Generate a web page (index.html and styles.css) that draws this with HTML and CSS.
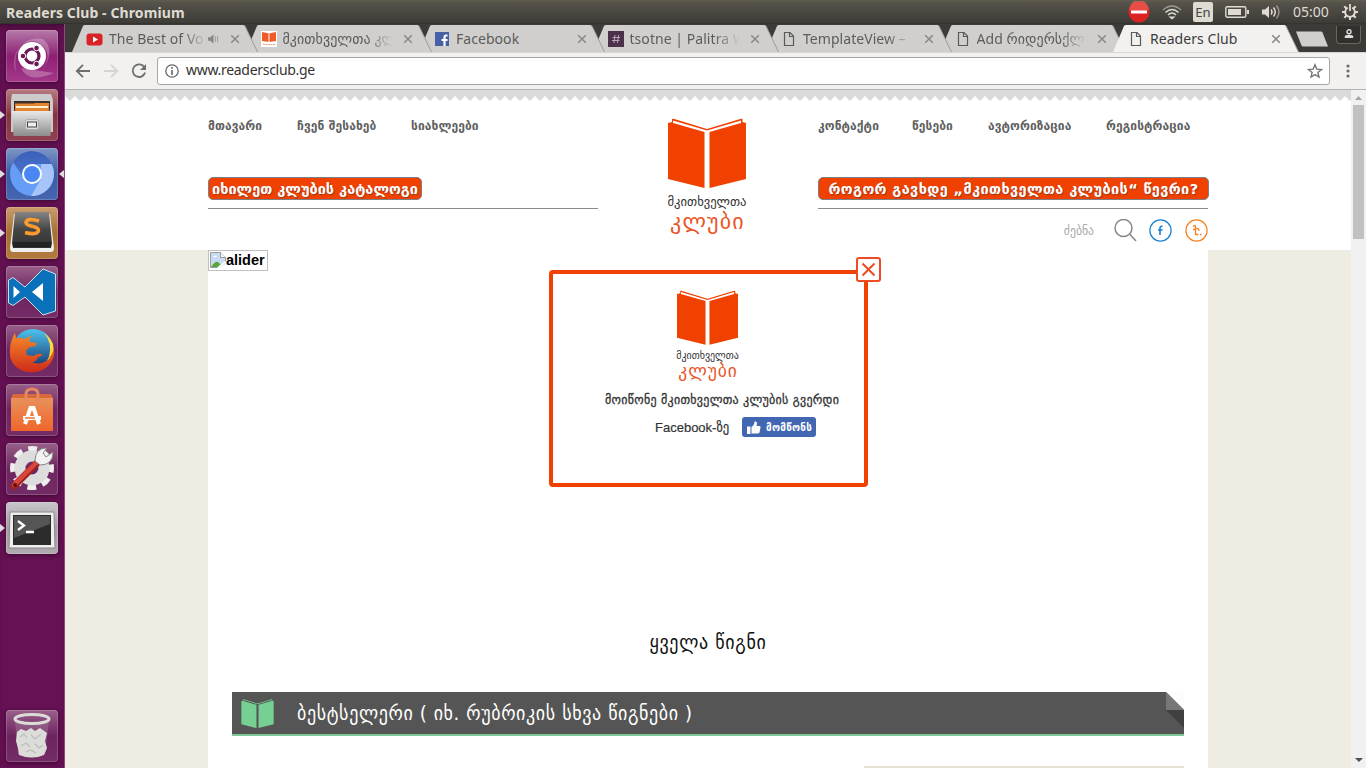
FILE: index.html
```html
<!DOCTYPE html>
<html lang="ka">
<head>
<meta charset="utf-8">
<title>Readers Club</title>
<link rel="stylesheet" href="styles.css">
</head>
<body>
<svg width="0" height="0" class="defs">
  <defs>
    <linearGradient id="chrome" x2="0" y2="1"><stop stop-color="#3a5fb8"/><stop offset="1" stop-color="#4d77d2"/></linearGradient>
    <linearGradient id="steel" x2="0" y2="1"><stop stop-color="#e8e8e8"/><stop offset="1" stop-color="#8c8c8c"/></linearGradient>
    <linearGradient id="dark" x2="0" y2="1"><stop stop-color="#858585"/><stop offset=".5" stop-color="#444"/><stop offset="1" stop-color="#333"/></linearGradient>
    <linearGradient id="fox" x2="0" y2="1"><stop stop-color="#f58a2b"/><stop offset="1" stop-color="#cf2c18"/></linearGradient>
    <linearGradient id="globe" x2="0" y2="1"><stop stop-color="#4cc4ee"/><stop offset="1" stop-color="#17306e"/></linearGradient>
    <linearGradient id="bag" x2="0" y2="1"><stop stop-color="#e8915a"/><stop offset="1" stop-color="#f0662b"/></linearGradient>
    <symbol id="tab" viewBox="0 0 186 28"><path class="tab-fill" d="M0 28 11 2Q11.500 1 13 1H171Q172.500 1 173 2L185.500 28Z"/><path class="tab-edge" d="M173 2 185.500 28" fill="none"/></symbol>
    <symbol id="x" viewBox="0 0 10 10"><path d="M1.200 1.200 8.800 8.800M8.800 1.200 1.200 8.800" stroke="#8a8a8a" stroke-width="1.600"/></symbol>
    <symbol id="doc" viewBox="0 0 16 16"><path d="M3.500 1.500H9L12.500 5V14.500H3.500ZM8.500 1.500V5.500H12.500" fill="none" stroke="#5a5a5a" stroke-width="1.200"/></symbol>
    <symbol id="book" viewBox="0 0 78 70"><path d="M0 5 4 4V1L5.500 .8 39 11 73 .8 74.500 1V4L78 5V61L41.500 70V14L73 5V2.500L39 12.500 5 2.500V5L36.500 14V70L0 61Z" class="book-fill"/></symbol>
  </defs>
</svg>
<div class="desktop">
  <header class="panel">
    <span class="panel-title">Readers Club - Chromium</span>
    <div class="indicators">
      <svg width="22" height="22" viewBox="0 0 22 22"><circle cx="11" cy="11" r="10.500" fill="#d22"/><path d="M1 9a10 10 0 0 1 20 0Q11 12 1 9" fill="#f06a5a" opacity=".6"/><path d="M3 9.500H19V12.500H3Z" fill="#fff"/></svg>
      <svg width="20" height="16" viewBox="0 0 20 16" fill="none" stroke="#dfdbd2" stroke-width="1.600"><path d="M1 6Q10-2 19 6" opacity=".55"/><path d="M3.500 8.500Q10 2.500 16.500 8.500M6 11Q10 7 14 11"/><path d="M8.500 13.200 10 14.500 11.500 13.200Z" fill="#dfdbd2"/></svg>
      <span class="lang">En</span>
      <svg width="24" height="14" viewBox="0 0 24 14"><rect x=".8" y="1.800" width="20" height="10.400" rx="1.500" fill="none" stroke="#dfdbd2" stroke-width="1.400"/><path d="M3 4H16V10H3ZM22 5H24V9H22Z" fill="#dfdbd2"/></svg>
      <svg width="20" height="16" viewBox="0 0 20 16" fill="none" stroke="#dfdbd2" stroke-width="1.500"><path d="M1 5.500H4L8 2V14L4 10.500H1Z" fill="#dfdbd2" stroke="none"/><path d="M10 5.500Q12 8 10 10.500M12.500 3.500Q16 8 12.500 12.500"/><path d="M15.500 1.500Q20.500 8 15.500 14.500" opacity=".5"/></svg>
      <span class="clock">05:00</span>
      <svg width="16" height="16" viewBox="0 0 16 16" fill="none" stroke="#dfdbd2"><path d="M5.800 3.800A4.800 4.800 0 1 0 10.200 3.800M8 0V7" stroke-width="1.800"/><path d="M8 13V16M0 8H3M13 8H16M2.300 2.300 4.500 4.500M13.700 2.300 11.500 4.500M2.300 13.700 4.500 11.500M13.700 13.700 11.500 11.500" stroke-width="2"/></svg>
    </div>
  </header>
  <div class="workspace">
    <nav class="launcher">
      <div class="tile dash"><svg viewBox="0 0 52 52"><path d="M10 42A24 24 0 0 1 37 9Q50 20 37 39 49 19 28 11 6 11 10 42M15 38Q22 54 48 43" fill="#fff" opacity=".25"/><circle cx="26" cy="26" r="14" fill="#fff"/><circle cx="26" cy="26" r="7" fill="none" stroke="#6b1854" stroke-width="3.200"/><g fill="#6b1854" stroke="#fff" stroke-width="1"><circle cx="17" cy="26" r="2.800"/><circle cx="30.500" cy="18" r="2.800"/><circle cx="30.500" cy="34" r="2.800"/></g></svg></div>
      <div class="tile files running"><svg viewBox="0 0 52 52"><path d="M6 5H45L47 11V43H5V11Z" fill="#ccc"/><path d="M8 12H44V24H8Z" fill="#3c302b"/><path d="M9 14.500H28L29 14H43V22H9Z" fill="#e38432"/><path d="M10 17H42V19H10Z" fill="#fff2cf"/><path d="M6 22H46L44.500 47H7.500Z" fill="url(#steel)"/><rect x="19.500" y="30.500" width="13" height="10" rx="2" fill="#ddd" stroke="#aaa"/><rect x="21.500" y="33" width="9" height="5" fill="#eee" stroke="#444"/></svg></div>
      <div class="tile chromium running focused"><svg viewBox="0 0 52 52"><circle cx="26" cy="26" r="22" fill="#669df6"/><path d="M7 14A22 22 0 0 1 46 16H26L17 29Z" fill="url(#chrome)"/><path d="M35 16H45.500A22 22 0 0 1 25 48L35 31Z" fill="#a6c4fa"/><circle cx="26" cy="26" r="10" fill="#fff"/><circle cx="26" cy="26" r="8" fill="#4a87f2"/></svg></div>
      <div class="tile sublime running"><svg viewBox="0 0 52 52"><path d="M8 7H44L48 41Q48 45 45 45H7Q4 45 4 41Z" fill="#eee"/><path d="M9 5H43L46 36 45 41H7L6 36Z" fill="url(#dark)"/><path d="M7 35H45V40H7Z" fill="#222"/><path d="M33 14Q20.500 10.500 20 15.500C20 20.500 32.500 18 32.500 23.500Q31.500 28.500 19 25.500" fill="none" stroke="#ff9b2e" stroke-width="3.600"/></svg></div>
      <div class="tile vscode"><svg viewBox="0 0 52 52"><path d="M2.500 14 7 11.500 19 21 37 3 49.500 8V45L37 49 19 31 7 39.500 2.500 37Z" fill="#0871ba" stroke="#cedfee"/><path d="M37 17 26 26 37 35ZM7.500 20V32L14 26Z" fill="#fff"/></svg></div>
      <div class="tile firefox"><svg viewBox="0 0 52 52"><circle cx="27" cy="24" r="20" fill="url(#globe)"/><path d="M38 8Q47 18 43 32 38 43 28 45L40 42Q50 30 47 19 44 12 38 8" fill="#ffd83b"/><path d="M9 8 10 13Q15 12 18 14L27 10Q22 14 24 17L31 18 30 21 24 22Q18 25 21 30L27 31Q32 28 36 29 36 32 32 32 30 38 25 37 35 41 43 34 47 28 48 23 50 34 41 42 31 50 17 46 2 40 4 23 5 14 9 8" fill="url(#fox)"/></svg></div>
      <div class="tile software"><svg viewBox="0 0 52 52"><path d="M7 10H45L47 14V47H5V14Z" fill="#d9683a"/><path d="M5 14H47V47H5Z" fill="url(#bag)"/><path d="M20 17V10Q20 5 26 5T32 10V17" fill="none" stroke="#e98660" stroke-width="3"/><path d="M19 40 24.500 24H27.500L33 40M17 34H35" fill="none" stroke="#fff" stroke-width="4"/><path d="M19 34H29" stroke="#ef7434" stroke-width="1.500"/></svg></div>
      <div class="tile settings"><svg viewBox="0 0 52 52"><circle cx="26" cy="25" r="18.500" fill="none" stroke="#eee" stroke-width="7" stroke-dasharray="8.500 6.030" stroke-dashoffset="4.250"/><circle cx="26" cy="25" r="12" fill="none" stroke="#ddd" stroke-width="11"/><path d="M8 43 32 19" stroke="#9e211d" stroke-width="7" stroke-linecap="round"/><path d="M8 42 31 19" stroke="#db463c" stroke-width="4.500" stroke-linecap="round"/><path d="M29 18Q29 5 41 5L37 10 40 14 47 9Q47 22 34 22Z" fill="#f2f2f2" stroke="#888"/><circle cx="9" cy="42" r="2" fill="#5c1411"/></svg></div>
      <div class="tile terminal running"><svg viewBox="0 0 52 52"><path d="M4 10H48L49 46H3Z" fill="#eee" stroke="#888"/><path d="M7 13H45V43H7Z" fill="#2c2c2c"/><path d="M8 14H44V22L8 36Z" fill="#555"/><path d="M12 19 18 23.500 12 28M20 30H28" fill="none" stroke="#fff" stroke-width="2.300"/></svg></div>
      <div class="tile trash"><svg viewBox="0 0 52 52"><path d="M9 12 12 44Q26 51 39 44L43 12Z" fill="#b89ab4" opacity=".3"/><path d="M11 22 15 19 20 21 25 18 29 21 34 18 41 23 39 31 41 38 38 45Q26 50 13 45L12 38 10 31Z" fill="#dcdcd9"/><path d="M14 27 18 24 21 28M25 25 29 29 35 24M15 36 20 33 24 37M29 34 33 38 37 35M20 42 25 40 30 43" fill="none" stroke="#bcbcb8" stroke-width="1.200"/><ellipse cx="26" cy="9" rx="17" ry="4.500" fill="none" stroke="#dcdcd6" stroke-width="3"/></svg></div>
    </nav>
    <main class="browser">
      <div class="tabstrip">
        <div class="tab"><svg class="tab-bg"><use href="#tab"/></svg><svg class="fav" viewBox="0 0 16 16"><rect x="-.5" y="2.500" width="16" height="12" rx="3" fill="#d72228"/><path d="M6 5.500 11 8.500 6 11.500Z" fill="#fff"/></svg><span class="tab-title fade short">The Best of Vo</span><svg class="audio" viewBox="0 0 12 10"><path d="M0 3H2.500L6 0V10L2.500 7H0Z" fill="#888"/><path d="M8 2V8M10.500 1.500V8.500" stroke="#999"/></svg><svg class="close"><use href="#x"/></svg></div>
        <div class="tab"><svg class="tab-bg"><use href="#tab"/></svg><svg class="fav" viewBox="0 0 16 16"><path d="M0 0H16V16H0Z" fill="#fff"/><path d="M1 1 8 2.500 15 1V10L8 11 1 10Z" fill="#f15a24"/><path d="M8 2.500V11" stroke="#fff"/><path d="M2 13.500H14" stroke="#f2a387" stroke-dasharray="2 .5"/></svg><span class="tab-title fade">მკითხველთა კლ</span><svg class="close"><use href="#x"/></svg></div>
        <div class="tab"><svg class="tab-bg"><use href="#tab"/></svg><svg class="fav" viewBox="0 0 16 16"><path d="M1 1H15V15H1Z" fill="#4560a5"/><path d="M13.500 4.500H12Q10.500 4.500 10.500 6.500V15M7.500 9H13.500" fill="none" stroke="#fff" stroke-width="2.200"/></svg><span class="tab-title">Facebook</span><svg class="close"><use href="#x"/></svg></div>
        <div class="tab"><svg class="tab-bg"><use href="#tab"/></svg><svg class="fav" viewBox="0 0 16 16"><path d="M0 0H16V16H0Z" fill="#4b3149"/><path d="M7 4 6 12M10.500 4 9.500 12M4.500 6.500H12M4 9.500H11.500" stroke="#b9a5b7"/></svg><span class="tab-title fade">tsotne | Palitra W</span><svg class="close"><use href="#x"/></svg></div>
        <div class="tab"><svg class="tab-bg"><use href="#tab"/></svg><svg class="fav"><use href="#doc"/></svg><span class="tab-title fade">TemplateView –</span><svg class="close"><use href="#x"/></svg></div>
        <div class="tab"><svg class="tab-bg"><use href="#tab"/></svg><svg class="fav"><use href="#doc"/></svg><span class="tab-title fade">Add რიდერსქლ</span><svg class="close"><use href="#x"/></svg></div>
        <div class="tab active"><svg class="tab-bg"><use href="#tab"/></svg><svg class="fav"><use href="#doc"/></svg><span class="tab-title">Readers Club</span><svg class="close"><use href="#x"/></svg></div>
        <svg class="newtab" viewBox="0 0 34 16"><path d="M1 .5H26Q27 .5 27.500 1.500L33 15.500H8Q7 15.500 6.500 14.500Z" fill="#d0cfcd"/></svg>
        <div class="profile"><svg width="10" height="10" viewBox="0 0 10 10"><circle cx="5" cy="2.800" r="2" fill="none" stroke="#ddd" stroke-width="1.400"/><path d="M.8 9V7.500Q1 5.800 5 5.800T9.200 7.500V9Z" fill="#ddd"/></svg></div>
      </div>
      <div class="toolbar">
        <svg class="tool" viewBox="0 0 16 16"><path d="M15 8H2M8 1.800 1.800 8 8 14.200" fill="none" stroke="#6e6e6e" stroke-width="1.800"/></svg>
        <svg class="tool" viewBox="0 0 16 16"><path d="M1 8H14M8 1.800 14.200 8 8 14.200" fill="none" stroke="#d4d3d2" stroke-width="1.800"/></svg>
        <svg class="tool" viewBox="0 0 16 16"><path d="M13.500 4.500A6.300 6.300 0 1 0 14.100 9.500" fill="none" stroke="#6e6e6e" stroke-width="1.800"/><path d="M15 1V7H9Z" fill="#6e6e6e"/></svg>
        <div class="omnibox">
          <svg width="14" height="14" viewBox="0 0 14 14"><circle cx="7" cy="7" r="6.200" fill="none" stroke="#666" stroke-width="1.300"/><path d="M7 3V4.700M7 6V11" stroke="#666" stroke-width="1.600"/></svg>
          <span class="url">www.readersclub.ge</span>
          <svg width="16" height="16" viewBox="0 0 16 16"><path d="M8 1.800 9.800 6.100 14.500 6.500 10.900 9.500 12 14 8 11.600 4 14 5.100 9.500 1.500 6.500 6.200 6.100Z" fill="none" stroke="#757575" stroke-width="1.400"/></svg>
        </div>
        <svg width="4" height="14" viewBox="0 0 4 14" fill="#6a6a6a"><circle cx="2" cy="2" r="1.600"/><circle cx="2" cy="7" r="1.600"/><circle cx="2" cy="12" r="1.600"/></svg>
      </div>
      <div class="viewport">
        <div class="page">
          <div class="masthead">
            <svg class="zigzag" width="1286" height="11"><defs><pattern id="zz" width="10" height="11" patternUnits="userSpaceOnUse"><path d="M0 0H10V6L5 11 0 6Z" fill="#dadada"/></pattern></defs><rect width="1286" height="11" fill="url(#zz)"/></svg>
            <div class="head-grid">
              <div class="head-col">
                <div class="menu"><a class="m1">მთავარი</a><a class="m2">ჩვენ შესახებ</a><a class="m3">სიახლეები</a></div>
                <div class="cta-row"><a class="cta cta-left"><span>იხილეთ კლუბის კატალოგი</span></a></div>
              </div>
              <div class="logo"><svg class="logo-book" width="78" height="70"><use href="#book"/></svg><span class="logo-top">მკითხველთა</span><span class="logo-bottom">კლუბი</span></div>
              <div class="head-col">
                <div class="menu"><a class="m4">კონტაქტი</a><a class="m5">წესები</a><a class="m6">ავტორიზაცია</a><a class="m7">რეგისტრაცია</a></div>
                <div class="cta-row"><a class="cta cta-right"><span>როგორ გავხდე „მკითხველთა კლუბის“ წევრი?</span></a></div>
                <div class="search-row"><span class="search">ძებნა</span>
                  <svg width="23" height="23" viewBox="0 0 23 23" fill="none" stroke="#868686" stroke-width="1.500"><circle cx="9.500" cy="9" r="8.500"/><path d="M15.500 15 22 22"/></svg>
                  <svg class="fb" width="23" height="23" viewBox="0 0 23 23" fill="none" stroke="#1681d2"><circle cx="11.500" cy="11.500" r="10.600" stroke-width="1.200"/><path d="M13.500 7.500Q11 6.500 11 9.500V16M9 11H13.500" stroke-width="1.600"/></svg>
                  <svg class="pl" width="23" height="23" viewBox="0 0 23 23" fill="none" stroke="#f58220"><circle cx="11.500" cy="11.500" r="10.600" stroke-width="1.200"/><path d="M8 7H10.500V10.500H8M10.500 10.500V15.500H13.500M10.500 9.500Q14 9 14 12M15 15.500H16.500" stroke-width="1.300"/></svg>
                </div>
              </div>
            </div>
          </div>
          <div class="container">
            <div class="slider">
              <div class="broken"><svg width="16" height="16" viewBox="0 0 16 16"><path d="M.5.500H10.500L15.500 5.500V11L9 15.500H.5Z" fill="#c7dcf4" stroke="#9b9b9b"/><path d="M10.500.500V5.500H15.500" fill="#fff" stroke="#9b9b9b"/><path d="M3 5Q5 2 7 5Z" fill="#fff"/><path d="M1 15Q5 9 8 10L11 13 8 15Z" fill="#57a639"/><path d="M8 16 16 9.500" stroke="#fff" stroke-width="2"/></svg><b>alider</b></div>
              <div class="popup">
                <span class="popup-close"><svg width="15" height="15" viewBox="0 0 15 15"><path d="M1.500 1.500 13.500 13.500M13.500 1.500 1.500 13.500" stroke="#ee4a23" stroke-width="2"/></svg></span>
                <div class="logo small"><svg class="logo-book" width="61" height="55"><use href="#book"/></svg><span class="logo-top">მკითხველთა</span><span class="logo-bottom">კლუბი</span></div>
                <div class="like-title">მოიწონე მკითხველთა კლუბის გვერდი</div>
                <div class="like-row"><span class="on-fb">Facebook-<i>ზე</i></span><span class="like"><svg width="14" height="13" viewBox="0 0 14 13" fill="#fff"><path d="M0 5.500H3.500V13H0ZM4.500 6Q7.500 4 7.500.500 10 0 10 2.500L9.500 5H12.500Q14 5 13.500 6.500L12.500 11.500Q12 12.500 11 12.500H4.500Z"/></svg><span>მომწონს</span></span></div>
              </div>
            </div>
            <h2 class="all-books">ყველა წიგნი</h2>
            <div class="banner"><svg class="banner-book" width="33" height="29"><use href="#book"/></svg><span class="banner-text">ბესტსელერი ( იხ. რუბრიკის სხვა წიგნები )</span><svg class="fold" width="18" height="36"><path d="M0 0H18V18Z" fill="#fcfcfc"/><path d="M0 0V18H18Z" fill="#777"/><path d="M0 18H18V36Z" fill="#404040"/></svg></div>
            <div class="next-card"></div>
          </div>
        </div>
        <div class="scrollbar"><svg width="7" height="4"><path d="M0 4 3.500 0 7 4Z" fill="#a3a3a3"/></svg><div class="thumb"></div><svg class="down" width="8" height="4"><path d="M0 0 4 4 8 0Z" fill="#505050"/></svg></div>
      </div>
    </main>
  </div>
</div>
</body>
</html>
```
FILE: styles.css
```css
* { box-sizing: border-box; }
body { margin: 0; font-family: "Noto Sans", "DejaVu Sans", sans-serif; }
svg { display: block; flex: none; }
span, a, b, h2 { white-space: nowrap; }
.defs { position: absolute; }
.desktop { width: 1366px; height: 768px; overflow: hidden; display: flex; flex-direction: column; }

.panel { height: 24px; flex: none; display: flex; align-items: center; justify-content: space-between; padding: 0 8px 0 6px; color: #dfdbd2; background: linear-gradient(#605e50, #55524a 12%, #3d3c37 94%, #302f2b); }
.panel-title { font: bold 14px "Noto Sans", sans-serif; letter-spacing: .1px; }
.indicators { display: flex; align-items: center; gap: 12px; margin-left: auto; }
.lang { width: 20px; height: 20px; border-radius: 2px; background: #dfdbd2; color: #45443e; font-size: 13px; line-height: 20px; text-align: center; margin-left: -1px; }
.clock { font-size: 14px; line-height: 20px; width: 37px; letter-spacing: 0; padding-bottom: 1px; }

.workspace { flex: 1; min-height: 0; display: flex; }
.launcher { width: 65px; background: #651153; border-right: 1px solid #8b4b7d; padding: 6px 6px; display: flex; flex-direction: column; gap: 7px; box-shadow: inset 0 6px 6px -4px #3c0b31; }
.tile { position: relative; width: 52px; height: 52px; flex: none; border-radius: 4px; background: linear-gradient(#986089, #6e245f 50%, #742c66); box-shadow: inset 0 0 0 1px rgba(255,255,255,.18), 0 1px 4px #3a082f; }
.tile svg { width: 52px; height: 52px; }
.dash { background: linear-gradient(#b67aa9, #8d2075 50%, #a4388a); }
.files { background: linear-gradient(#b77c83, #84333f 50%, #914252); }
.chromium { background: linear-gradient(#8096c6, #3c5ba8 50%, #4766b0); }
.sublime { background: linear-gradient(#c99d6f, #a86f33 50%, #b27a3f); }
.terminal { background: linear-gradient(#c9c5ca, #a49da4 50%, #b0aab0); }
.trash { margin-top: auto; margin-bottom: 0; }
.running::before { content: ""; position: absolute; left: -6px; top: 22px; border: 4px solid transparent; border-left: 5px solid #ddd; border-right: 0; }
.focused::after { content: ""; position: absolute; right: -6px; top: 22px; border: 4px solid transparent; border-right: 5px solid #ddd; border-left: 0; }

.browser { flex: 1; min-width: 0; display: flex; flex-direction: column; }
.tabstrip { height: 28px; flex: none; background: #3c3b37; padding-left: 7px; display: flex; }
.tab { position: relative; width: 185.5px; margin-right: -12px; flex: none; height: 28px; display: flex; align-items: center; padding: 2px 16px 0 15px; }
.tab:nth-child(1) { z-index: 7; } .tab:nth-child(2) { z-index: 6; } .tab:nth-child(3) { z-index: 5; } .tab:nth-child(4) { z-index: 4; } .tab:nth-child(5) { z-index: 3; } .tab:nth-child(6) { z-index: 2; }
.tab.active { z-index: 9; }
.tab-bg { position: absolute; left: 0; top: 0; width: 186px; height: 28px; z-index: -1; fill: #d0cfcd; stroke: none; }
.tab-edge { stroke: #9c9b99; }
.active .tab-bg { fill: #f2f1f0; }
.fav { width: 16px; height: 16px; overflow: visible; }
.tab-title { margin-left: 6px; width: 110px; font-size: 14px; line-height: 20px; color: #5c5c5c; letter-spacing: .05px; }
.fade { mask-image: linear-gradient(90deg, #000 76%, transparent 100%); }
.short { width: 98px; }
.active .tab-title { color: #3c3c3c; }
.audio { width: 11px; height: 10px; margin-left: 1px; }
.close { width: 10px; height: 10px; margin-left: auto; margin-right: 2px; }
.newtab { width: 34px; height: 16px; margin: 7px 0 0 8px; }
.profile { width: 25px; height: 18px; margin: 2px 0 0 7px; border: 1px solid #69675f; border-top: 0; border-radius: 0 0 4px 4px; background: #31302c; padding: 3px 0 0 7px; }
.toolbar { height: 38px; flex: none; background: #f2f1f0; border-top: 1px solid #d8d7d5; border-bottom: 1px solid #b6b4b0; display: flex; align-items: center; padding: 0 16px 0 10px; gap: 12px; }
.tool { width: 16px; height: 16px; }
.omnibox { flex: 1; height: 28px; margin-left: -2px; border: 1px solid #a6a5a3; border-radius: 3px; background: #fff; display: flex; align-items: center; padding: 0 6px 0 7px; gap: 7px; margin-right: 4px; }
.url { flex: 1; color: #333; font-size: 14px; line-height: 20px; letter-spacing: -.3px; padding-bottom: 2px; }

.viewport { flex: 1; min-height: 0; display: flex; }
.page { width: 1286px; background: #efede1; overflow: hidden; }
.masthead { height: 160px; background: #fff; }
.head-grid { width: 1000px; margin: 0 auto; display: grid; grid-template-columns: 390px 220px 390px; }
.head-col { padding-top: 15px; }
.menu { display: flex; font: bold 12px "DejaVu Sans", sans-serif; letter-spacing: .1px; color: #606060; line-height: 20px; height: 20px; }
.m1 { width: 89px; } .m2 { width: 114px; } .m4 { width: 94px; } .m5 { width: 76px; } .m6 { width: 118px; }
.cta-row { margin-top: 41px; height: 32px; border-bottom: 1px solid #8b8b8b; }
.cta { display: flex; justify-content: center; align-items: center; height: 23px; border: 1px solid #7a8288; border-radius: 5px; background: #f04100; color: #fff; font: bold 14.5px/20px "DejaVu Sans", sans-serif; text-shadow: 1px 1px 1px #9a3a18; }
.cta-left { width: 214px; }
.cta-right { width: 391px; letter-spacing: .37px; }
.search-row { display: flex; justify-content: flex-end; align-items: center; height: 43px; }
.search { font: 13px "DejaVu Sans Condensed", "DejaVu Sans", sans-serif; color: #a8a8a8; margin-right: 20px; }
.fb { margin-left: 12px; } .pl { margin-left: 13px; }
.book-fill { fill: var(--book, #f04100); }
.logo { display: flex; flex-direction: column; align-items: center; padding: 17px 2px 0 0; font-family: "DejaVu Sans", sans-serif; }
.logo-top { font-size: 12.6px; line-height: 16px; color: #333; margin-top: 6px; }
.logo-bottom { font-size: 22px; line-height: 24px; color: #e8562a; letter-spacing: 1.2px; margin-right: -1px; }

.container { width: 1000px; height: 518px; margin: 0 auto; background: #fff; }
.slider { position: relative; height: 380px; }
.broken { display: flex; width: 60px; height: 21px; border: 1px solid #c0c0c0; padding: 1px; font: bold 14.5px/16px "Liberation Sans", sans-serif; color: #000; }
.popup { position: absolute; left: 341px; top: 20px; width: 319px; height: 217px; border: 4px solid #f04100; border-radius: 4px; }
.popup-close { position: absolute; right: -17px; top: -17px; width: 25px; height: 25px; border: 2px solid #ee4a23; border-radius: 3px; background: #fff; display: flex; align-items: center; justify-content: center; }
.small { padding-top: 16px; }
.small .logo-top { font-size: 10px; line-height: 12px; margin-top: 5px; }
.small .logo-bottom { font-size: 17.5px; line-height: 19px; letter-spacing: .9px; }
.like-title { margin: 9px 0 0 52px; width: 237px; white-space: nowrap; font: 13.3px/20px "DejaVu Sans Condensed", "DejaVu Sans", sans-serif; letter-spacing: .3px; color: #333; -webkit-text-stroke: .3px #333; }
.like-row { display: flex; align-items: center; margin: 7px 0 0 102px; height: 20px; }
.on-fb { width: 87px; font: 13px "Liberation Sans", "DejaVu Sans Condensed", sans-serif; color: #333; -webkit-text-stroke: .2px #333; }
.on-fb i { font: 14px/14px "DejaVu Sans Condensed", sans-serif; }
.like { width: 74px; height: 20px; border-radius: 3px; background: #4267b2; color: #fff; display: flex; align-items: center; gap: 5px; padding-left: 5px; font: bold 11px "DejaVu Sans Condensed", sans-serif; letter-spacing: .3px; }
.all-books { margin: 0; text-align: center; font: 20px/24px "DejaVu Sans Condensed", sans-serif; letter-spacing: .7px; color: #111; }
.banner { --book: #76d093; width: 952px; height: 44px; margin: 38px auto 0; background: #555; border-bottom: 2px solid #7cc795; display: flex; color: #fff; }
.banner-book { margin: 7px 0 0 9px; }
.banner-text { margin-left: 23px; font: 20px/42px "DejaVu Sans Condensed", sans-serif; letter-spacing: .62px; }
.fold { margin-left: auto; }
.next-card { width: 320px; height: 2px; margin: 30px 24px 0 auto; background: #e5e1d3; }
.scrollbar { width: 15px; background: #f1f1f1; display: flex; flex-direction: column; align-items: center; padding: 6px 0; }
.thumb { width: 11px; height: 134px; margin-top: 5px; background: #c1c1c1; }
.down { margin-top: auto; }
```
